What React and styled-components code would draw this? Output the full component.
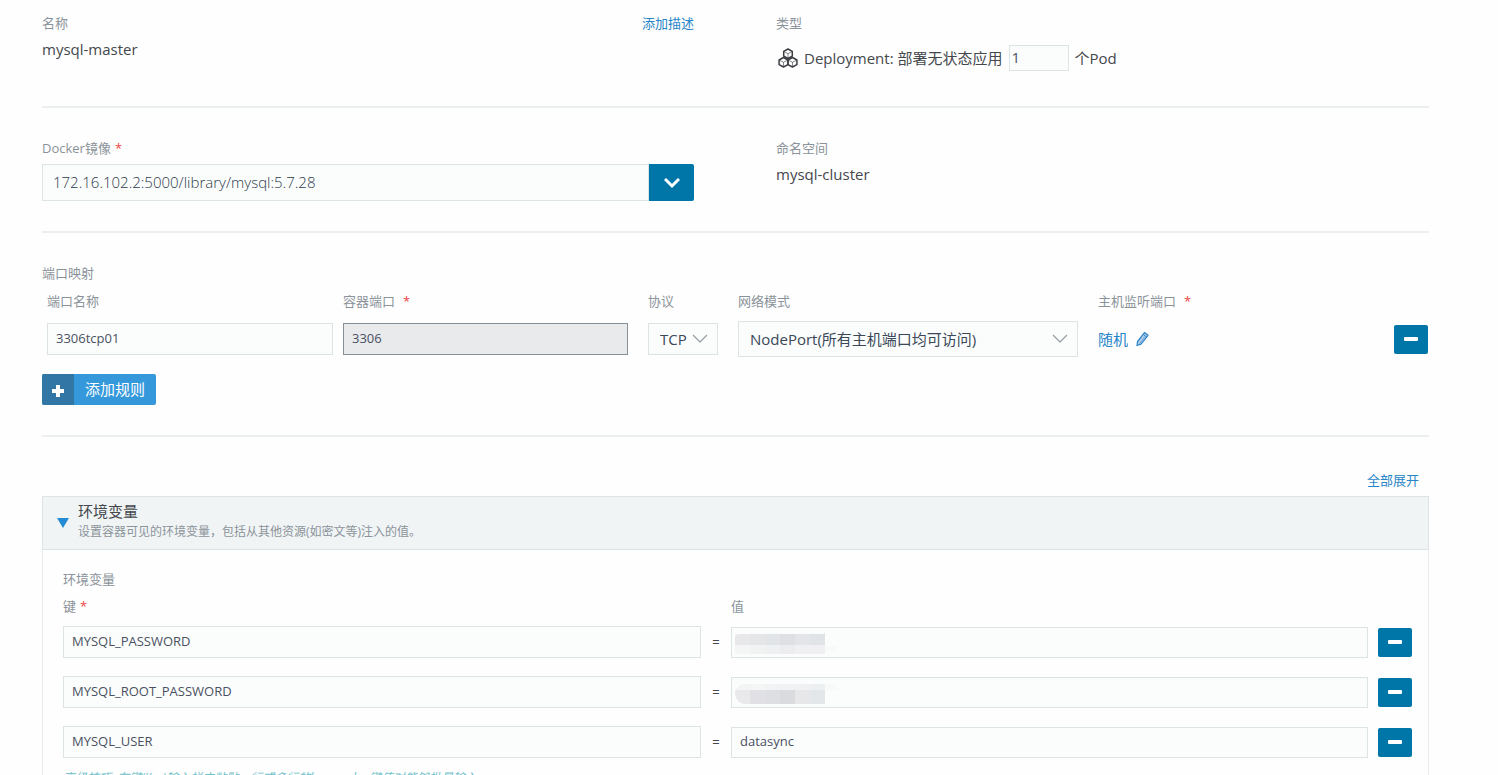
import React from "react";
import styled, { createGlobalStyle } from "styled-components";

const GlobalStyle = createGlobalStyle`
  * {
    box-sizing: border-box;
  }
  body {
    margin: 0;
    background: #fefefe;
    color: #44474c;
    font-family: "Open Sans", "Noto Sans CJK SC", sans-serif;
    font-size: 15px;
    line-height: 20px;
  }
  input,
  select,
  button {
    font: inherit;
  }
`;

const Page = styled.main`
  padding: 13px 69px 0 42px;
`;

const Section = styled.section`
  border-bottom: 2px solid #ebefef;
  padding-bottom: ${(props) => props.$bottom || 30}px;
  margin-bottom: 30px;
`;

const Columns = styled.div`
  display: grid;
  grid-template-columns: 652fr 653fr;
  column-gap: 82px;
`;

const LabelRow = styled.div`
  display: flex;
  justify-content: space-between;
`;

const Label = styled.label`
  display: block;
  color: #8b939a;
  font-size: 13px;
`;

const Required = styled.span`
  color: #f0433f;
  margin-left: ${(props) => (props.$wide ? 8 : 4)}px;
`;

const Link = styled.a`
  display: inline-flex;
  align-items: center;
  gap: 8px;
  color: #2785c8;
  font-size: ${(props) => props.$size || 13}px;
  text-decoration: none;
`;

const Value = styled.div`
  margin-top: 6px;
`;

const Scale = styled.div`
  display: flex;
  align-items: center;
  gap: 6px;
  margin-top: 12px;
  padding-left: 2px;
`;

const Input = styled.input`
  display: block;
  width: 100%;
  height: ${(props) => props.$height || 32}px;
  padding: 0 8px 2px;
  border: 1px solid #dce4e4;
  border-radius: 0;
  background: #fbfdfc;
  color: #4a5162;
  font-size: 13px;
  outline: none;
  &:disabled {
    border-color: #868e96;
    background: #e9eaec;
  }
`;

const PodInput = styled(Input)`
  width: 60px;
  padding: 0 2px 2px;
  font-size: 15px;
`;

const ImageBox = styled.div`
  display: flex;
  margin-top: 6px;
`;

const ImageInput = styled(Input)`
  padding: 0 10px 2px;
  color: #2c3a4a;
  font-size: 15px;
  font-weight: 300;
`;

const Toggle = styled.button`
  flex: none;
  width: 45px;
  padding: 0;
  border: 0;
  border-radius: 0 2px 2px 0;
  background: #0075a8;
`;

const PortGrid = styled.div`
  display: grid;
  grid-template-columns: 296fr 305fr 90px 360fr 296fr 34px;
  align-items: center;
  row-gap: 10px;
  margin: 8px 1px 0 5px;
`;

const Cell = styled.div`
  margin-right: ${(props) => props.$gap || 20}px;
`;

const SelectBox = styled(Cell)`
  position: relative;
  svg {
    position: absolute;
    right: 10px;
    top: 50%;
    transform: translateY(-50%);
    pointer-events: none;
  }
`;

const Select = styled.select`
  display: block;
  appearance: none;
  width: 100%;
  height: ${(props) => props.$height}px;
  padding: 0 11px;
  border: 1px solid #dce4e4;
  border-radius: 0;
  background: #fbfdfc;
  color: #3a4858;
`;

const RemoveButton = styled.button`
  display: flex;
  align-items: center;
  justify-content: center;
  flex: none;
  width: 34px;
  height: 29px;
  padding: 0;
  border: 0;
  border-radius: 2px;
  background: #0075a8;
`;

const AddButton = styled.button`
  display: flex;
  height: 31px;
  margin-top: 17px;
  padding: 0;
  border: 0;
  border-radius: 2px;
  overflow: hidden;
  background: #3498db;
  color: #fff;
`;

const AddIcon = styled.span`
  display: flex;
  align-items: center;
  justify-content: center;
  width: 32px;
  height: 31px;
  padding-top: 2px;
  background: #3276a6;
`;

const AddText = styled.span`
  padding: 0 11px;
  line-height: 30px;
`;

const ExpandRow = styled.div`
  display: flex;
  justify-content: flex-end;
  padding: 3px 10px 6px 0;
`;

const Panel = styled.section`
  border: 1px solid #e8eeee;
  border-top: 0;
`;

const PanelHead = styled.header`
  display: flex;
  align-items: center;
  gap: 9px;
  height: 54px;
  margin: 0 -1px;
  padding: 0 14px;
  border: 1px solid #dce4e4;
  background: #f0f4f5;
`;

const PanelTitle = styled.h2`
  margin: 0;
  font-size: 15px;
  font-weight: 400;
  line-height: 20px;
`;

const PanelNote = styled.p`
  margin: 0;
  padding: 1px 0 3px;
  color: #8b939a;
  font-size: 12px;
`;

const PanelBody = styled.div`
  padding: 19px 16px 20px 20px;
`;

const EnvRow = styled.div`
  display: grid;
  grid-template-columns: 638fr 30px 647fr 34px;
  align-items: center;
  margin-bottom: 18px;
`;

const EnvLabels = styled(EnvRow)`
  margin: 7px 0 10px;
`;

const Equals = styled.span`
  text-align: center;
  font-size: 13px;
`;

const ValueBox = styled.div`
  position: relative;
  margin-right: 10px;
`;

const Mask = styled.svg`
  position: absolute;
  left: 4px;
  top: 6px;
`;

const Tip = styled.p`
  margin: -8px 0 0;
  color: #6cc0c8;
  font-size: 12px;
  font-style: italic;
`;

const PodsIcon = () => (
  <svg width="20" height="20" viewBox="0 0 20 20" fill="none" stroke="#3a3d42">
    <g strokeWidth="1.5" strokeLinejoin="round">
      <path d="M10 1l4.300 2.300v4.800L10 10.500 5.700 8.100V3.300z" />
      <path d="M5.500 9.500L9.900 12v4.600L5.500 19 1.100 16.600V12z" />
      <path d="M14.500 9.500l4.400 2.500v4.600L14.500 19l-4.600-2.400V12z" />
    </g>
    <path
      strokeWidth="0.6"
      d="M6 3.500l4 2.200 4-2.200M10 5.700V10M1.500 12.200l4 2.100 4.200-2.100M5.500 14.300V19M10.200 12.200l4.300 2.100 4-2.100M14.500 14.300V19"
    />
  </svg>
);

const ThinArrow = () => (
  <svg width="16" height="10" viewBox="0 0 16 10" fill="none">
    <path d="M1 1l7 7 7-7" stroke="#9aa2a8" strokeWidth="1.3" />
  </svg>
);

const Minus = () => (
  <svg width="14" height="4" viewBox="0 0 14 4">
    <rect width="14" height="4" rx="1" fill="#fff" />
  </svg>
);

const Pencil = () => (
  <svg width="14" height="16" viewBox="0 0 14 16">
    <path
      d="M1 14.500l.6-4L8.500 1.600 12 4.300l-7 8.800z"
      fill="#b9d0ea"
      stroke="#2f86cc"
      strokeWidth="1.3"
      strokeLinejoin="round"
    />
    <path d="M7.300 3.300l3.500 2.700" stroke="#2f86cc" />
    <path d="M9 5.500l-5.500 7" stroke="#2f86cc" strokeWidth="0.6" />
  </svg>
);

const masks = [
  {
    clip: "M0 4q0-3 4-3h85v-1h1v22H4q-4 0-4-4z",
    rows: [
      { y: 0, h: 12, colors: ["#e8e8ea", "#e5e6e8", "#e2e5e8", "#dfe0e4", "#e4e5e8", "#e0e4e7"] },
      { y: 12, h: 9, colors: ["#f4f5f5", "#f1f3f2", "#eff0f2", "#ededf0", "#f0f0f3", "#f0f0f3"] },
    ],
  },
  {
    clip: "M0 10q1-7 8-9h82v20H9q-8-2-9-10z",
    rows: [
      { y: 0, h: 7, colors: ["#f3f4f4", "#f4f5f5", "#f2f3f4", "#f1f2f3", "#f0f1f3", "#ecf0f1"] },
      { y: 7, h: 14, colors: ["#e9e9eb", "#e1e1e5", "#dedfe2", "#dadbde", "#e7e7e9", "#e3e7ea"] },
    ],
  },
];

const envs = [
  { name: "MYSQL_PASSWORD", mask: 0 },
  { name: "MYSQL_ROOT_PASSWORD", mask: 1 },
  { name: "MYSQL_USER", value: "datasync" },
];

const MaskedValue = ({ index }) => (
  <Mask width="104" height="22" aria-hidden="true">
    <clipPath id={`mask-${index}`}>
      <path d={masks[index].clip} />
    </clipPath>
    <g clipPath={`url(#mask-${index})`}>
      {masks[index].rows.map((row) =>
        row.colors.map((color, i) => (
          <rect key={`${row.y}-${i}`} x={i * 15} y={row.y} width="15" height={row.h} fill={color} />
        ))
      )}
    </g>
    <path d={index === 0 ? "M90 13h13l-4 6h-9z" : "M90 1h8l6 6H90z"} fill="#f8faf9" />
  </Mask>
);

const BasicSection = () => (
  <Section $bottom={35}>
    <Columns>
      <div>
        <LabelRow>
          <Label as="span">名称</Label>
          <Link href="#">添加描述</Link>
        </LabelRow>
        <Value>mysql-master</Value>
      </div>
      <div>
        <Label htmlFor="pods">类型</Label>
        <Scale>
          <PodsIcon />
          <span>Deployment: 部署无状态应用</span>
          <PodInput id="pods" $height={26} defaultValue="1" />
          <span>个Pod</span>
        </Scale>
      </div>
    </Columns>
  </Section>
);

const ImageSection = () => (
  <Section>
    <Columns>
      <div>
        <Label htmlFor="image">
          Docker镜像<Required>*</Required>
        </Label>
        <ImageBox>
          <ImageInput id="image" $height={37} defaultValue="172.16.102.2:5000/library/mysql:5.7.28" />
          <Toggle aria-label="选择镜像">
            <svg width="16" height="11" viewBox="0 0 16 11" fill="none">
              <path d="M1 1l7 7 7-7" stroke="#fff" strokeWidth="3" />
            </svg>
          </Toggle>
        </ImageBox>
      </div>
      <div>
        <Label as="span">命名空间</Label>
        <Value>mysql-cluster</Value>
      </div>
    </Columns>
  </Section>
);

const PortSection = () => (
  <Section>
    <Label as="span">端口映射</Label>
    <PortGrid>
      <Label htmlFor="port-name">端口名称</Label>
      <Label htmlFor="port">
        容器端口<Required $wide>*</Required>
      </Label>
      <Label htmlFor="protocol">协议</Label>
      <Label htmlFor="mode">网络模式</Label>
      <Label as="span">
        主机监听端口<Required $wide>*</Required>
      </Label>
      <span />
      <Cell $gap={10}>
        <Input id="port-name" defaultValue="3306tcp01" />
      </Cell>
      <Cell>
        <Input id="port" defaultValue="3306" disabled />
      </Cell>
      <SelectBox>
        <Select id="protocol" $height={32}>
          <option>TCP</option>
        </Select>
        <ThinArrow />
      </SelectBox>
      <SelectBox>
        <Select id="mode" $height={36}>
          <option>NodePort(所有主机端口均可访问)</option>
        </Select>
        <ThinArrow />
      </SelectBox>
      <Link href="#" $size={15}>
        随机 <Pencil />
      </Link>
      <RemoveButton aria-label="删除规则">
        <Minus />
      </RemoveButton>
    </PortGrid>
    <AddButton>
      <AddIcon>
        <svg width="12" height="12" viewBox="0 0 12 12">
          <path d="M6 0v12M0 6h12" stroke="#fff" strokeWidth="4" />
        </svg>
      </AddIcon>
      <AddText>添加规则</AddText>
    </AddButton>
  </Section>
);

const EnvPanel = () => (
  <Panel>
    <PanelHead>
      <svg width="12" height="10" viewBox="0 0 12 10">
        <path d="M0 0h12L6 10z" fill="#258bd2" />
      </svg>
      <div>
        <PanelTitle>环境变量</PanelTitle>
        <PanelNote>设置容器可见的环境变量，包括从其他资源(如密文等)注入的值。</PanelNote>
      </div>
    </PanelHead>
    <PanelBody>
      <Label as="span">环境变量</Label>
      <EnvLabels>
        <Label htmlFor="key-0">
          键<Required>*</Required>
        </Label>
        <span />
        <Label htmlFor="value-0">值</Label>
      </EnvLabels>
      {envs.map((env, i) => (
        <EnvRow key={env.name}>
          <Input id={`key-${i}`} aria-label="键" defaultValue={env.name} />
          <Equals>=</Equals>
          <ValueBox>
            <Input id={`value-${i}`} aria-label="值" $height={31} defaultValue={env.value} />
            {env.mask !== undefined && <MaskedValue index={env.mask} />}
          </ValueBox>
          <RemoveButton aria-label="删除变量">
            <Minus />
          </RemoveButton>
        </EnvRow>
      ))}
      <Tip>高级技巧: 在键(Key)输入栏中粘贴一行或多行的key = value键值对能够批量输入</Tip>
    </PanelBody>
  </Panel>
);

const App = () => (
  <>
    <GlobalStyle />
    <Page>
      <BasicSection />
      <ImageSection />
      <PortSection />
      <ExpandRow>
        <Link href="#">全部展开</Link>
      </ExpandRow>
      <EnvPanel />
    </Page>
  </>
);

export default App;
